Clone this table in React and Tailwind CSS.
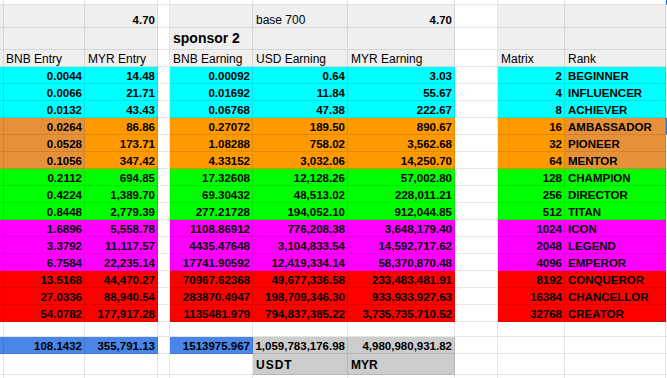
const W = [
  "w-[2px]",
  "w-[81px]",
  "w-[73px]",
  "w-[12px]",
  "w-[83px]",
  "w-[95px]",
  "w-[107px]",
  "w-[43px]",
  "w-[67px]",
  "w-[101px]",
  "flex-1",
];

const groups = {
  cyan: { main: "bg-[#00ffff]", dark: "bg-[#00ffff]" },
  orange: { main: "bg-[#ff9900]", dark: "bg-[#e69138]" },
  green: { main: "bg-[#00ff00]", dark: "bg-[#00ff00]" },
  magenta: { main: "bg-[#ff00ff]", dark: "bg-[#ff00ff]" },
  red: { main: "bg-[#ff0000]", dark: "bg-[#ff0000]" },
};

const rows = [
  ["0.0044", "14.48", "0.00092", "0.64", "3.03", "2", "BEGINNER", "cyan"],
  ["0.0066", "21.71", "0.01692", "11.84", "55.67", "4", "INFLUENCER", "cyan"],
  ["0.0132", "43.43", "0.06768", "47.38", "222.67", "8", "ACHIEVER", "cyan"],
  ["0.0264", "86.86", "0.27072", "189.50", "890.67", "16", "AMBASSADOR", "orange"],
  ["0.0528", "173.71", "1.08288", "758.02", "3,562.68", "32", "PIONEER", "orange"],
  ["0.1056", "347.42", "4.33152", "3,032.06", "14,250.70", "64", "MENTOR", "orange"],
  ["0.2112", "694.85", "17.32608", "12,128.26", "57,002.80", "128", "CHAMPION", "green"],
  ["0.4224", "1,389.70", "69.30432", "48,513.02", "228,011.21", "256", "DIRECTOR", "green"],
  ["0.8448", "2,779.39", "277.21728", "194,052.10", "912,044.85", "512", "TITAN", "green"],
  ["1.6896", "5,558.78", "1108.86912", "776,208.38", "3,648,179.40", "1024", "ICON", "magenta"],
  ["3.3792", "11,117.57", "4435.47648", "3,104,833.54", "14,592,717.62", "2048", "LEGEND", "magenta"],
  ["6.7584", "22,235.14", "17741.90592", "12,419,334.14", "58,370,870.48", "4096", "EMPEROR", "magenta"],
  ["13.5168", "44,470.27", "70967.62368", "49,677,336.58", "233,483,481.91", "8192", "CONQUEROR", "red"],
  ["27.0336", "88,940.54", "283870.4947", "198,709,346.30", "933,933,927.63", "16384", "CHANCELLOR", "red"],
  ["54.0782", "177,917.28", "1135481.979", "794,837,385.22", "3,735,735,710.52", "32768", "CREATOR", "red"],
];

function Cell({ col, bg = "bg-white", right, className = "", children }) {
  return (
    <div
      className={`${W[col]} ${bg} shrink-0 flex items-end whitespace-nowrap leading-[14px] border-r border-b border-black/10 ${
        right ? "justify-end pr-[2px]" : "pl-[3px]"
      } ${className}`}
    >
      {children}
    </div>
  );
}

function Row({ h, children }) {
  return <div className={`flex ${h}`}>{children}</div>;
}

const HEAD = "bg-[#efefef]";

function HeaderRow({ h, cells = {}, className = "" }) {
  // cells: col index -> { text, right, cls }
  const grayCols = [0, 1, 2, 4, 5, 6, 8, 9];
  return (
    <Row h={h}>
      {W.map((_, i) => {
        const c = cells[i];
        return (
          <Cell
            key={i}
            col={i}
            bg={grayCols.includes(i) ? HEAD : "bg-white"}
            right={c?.right}
            className={`${c?.cls ?? ""} ${className}`}
          >
            {c?.text}
          </Cell>
        );
      })}
    </Row>
  );
}

export default function App() {
  return (
    <div className="w-[667px] h-[378px] overflow-hidden bg-white text-black font-['Liberation_Sans',Arial,sans-serif]">
      {/* top partial row */}
      <Row h="h-[5px]">
        {W.map((_, i) => (
          <Cell
            key={i}
            col={i}
            className={i === 10 ? "border-l-2 border-l-[#1a73e8]" : ""}
          />
        ))}
      </Row>

      <HeaderRow
        h="h-[23px]"
        cells={{
          2: { text: "4.70", right: true, cls: "font-bold text-[11.5px]" },
          5: { text: "base 700", cls: "text-[12px]" },
          6: { text: "4.70", right: true, cls: "font-bold text-[11.5px]" },
        }}
      />

      <HeaderRow
        h="h-[22px]"
        cells={{
          4: { text: "sponsor 2", cls: "font-bold text-[14px] pb-[4px]" },
        }}
      />

      <HeaderRow
        h="h-[17px]"
        cells={{
          1: { text: "BNB Entry", cls: "text-[12px] !pl-[2px]" },
          2: { text: "MYR Entry", cls: "text-[12px]" },
          4: { text: "BNB Earning", cls: "text-[12px]" },
          5: { text: "USD Earning", cls: "text-[12px]" },
          6: { text: "MYR Earning", cls: "text-[12px]" },
          8: { text: "Matrix", cls: "text-[12px]" },
          9: { text: "Rank", cls: "text-[12px]" },
        }}
      />

      {/* ranks */}
      {rows.map(([bnb, myr, earn, usd, myrEarn, matrix, rank, g]) => {
        const { main, dark } = groups[g];
        const num = "font-bold text-[11.5px]";
        return (
          <Row key={rank} h="h-[17px]">
            <Cell col={0} bg={dark} />
            <Cell col={1} bg={dark} right className={num}>{bnb}</Cell>
            <Cell col={2} bg={main} right className={num}>{myr}</Cell>
            <Cell col={3} />
            <Cell col={4} bg={main} right className={num}>{earn}</Cell>
            <Cell col={5} bg={main} right className={num}>{usd}</Cell>
            <Cell col={6} bg={main} right className={num}>{myrEarn}</Cell>
            <Cell col={7} />
            <Cell col={8} bg={main} right className={num}>{matrix}</Cell>
            <Cell col={9} bg={dark} className={num}>{rank}</Cell>
            <Cell
              col={10}
              className={rank === "AMBASSADOR" ? "border-l-2 border-l-[#1a73e8]" : ""}
            />
          </Row>
        );
      })}

      {/* spacer row */}
      <Row h="h-[15px]">
        {W.map((_, i) => (
          <Cell key={i} col={i} />
        ))}
      </Row>

      {/* totals */}
      <Row h="h-[17px]">
        <Cell col={0} bg="bg-[#4a86e8]" className="border-[#3b6fc4]" />
        <Cell col={1} bg="bg-[#4a86e8]" right className="font-bold text-[11.5px] border-[#3b6fc4]">
          108.1432
        </Cell>
        <Cell col={2} bg="bg-[#4a86e8]" right className="font-bold text-[11.5px] border-[#3b6fc4]">
          355,791.13
        </Cell>
        <Cell col={3} />
        <Cell col={4} bg="bg-[#4a86e8]" right className="font-bold text-[11.5px] border-[#3b6fc4]">
          1513975.967
        </Cell>
        <Cell col={5} bg="bg-[#cccccc]" right className="font-bold text-[11.5px] border-[#a6a6a6]">
          1,059,783,176.98
        </Cell>
        <Cell col={6} bg="bg-[#cccccc]" right className="font-bold text-[11.5px] border-[#a6a6a6]">
          4,980,980,931.82
        </Cell>
        <Cell col={7} />
        <Cell col={8} />
        <Cell col={9} />
        <Cell col={10} />
      </Row>

      {/* currency labels */}
      <Row h="h-[21px]">
        {W.map((_, i) => {
          if (i === 5)
            return (
              <Cell key={i} col={i} bg="bg-[#cccccc]" className="font-bold text-[12px] tracking-[1px] pb-[2px] border-[#a6a6a6]">
                USDT
              </Cell>
            );
          if (i === 6)
            return (
              <Cell key={i} col={i} bg="bg-[#cccccc]" className="font-bold text-[12px] pb-[2px] border-[#a6a6a6]">
                MYR
              </Cell>
            );
          return <Cell key={i} col={i} />;
        })}
      </Row>

      <Row h="h-[10px]">
        {W.map((_, i) => (
          <Cell key={i} col={i} />
        ))}
      </Row>
    </div>
  );
}
